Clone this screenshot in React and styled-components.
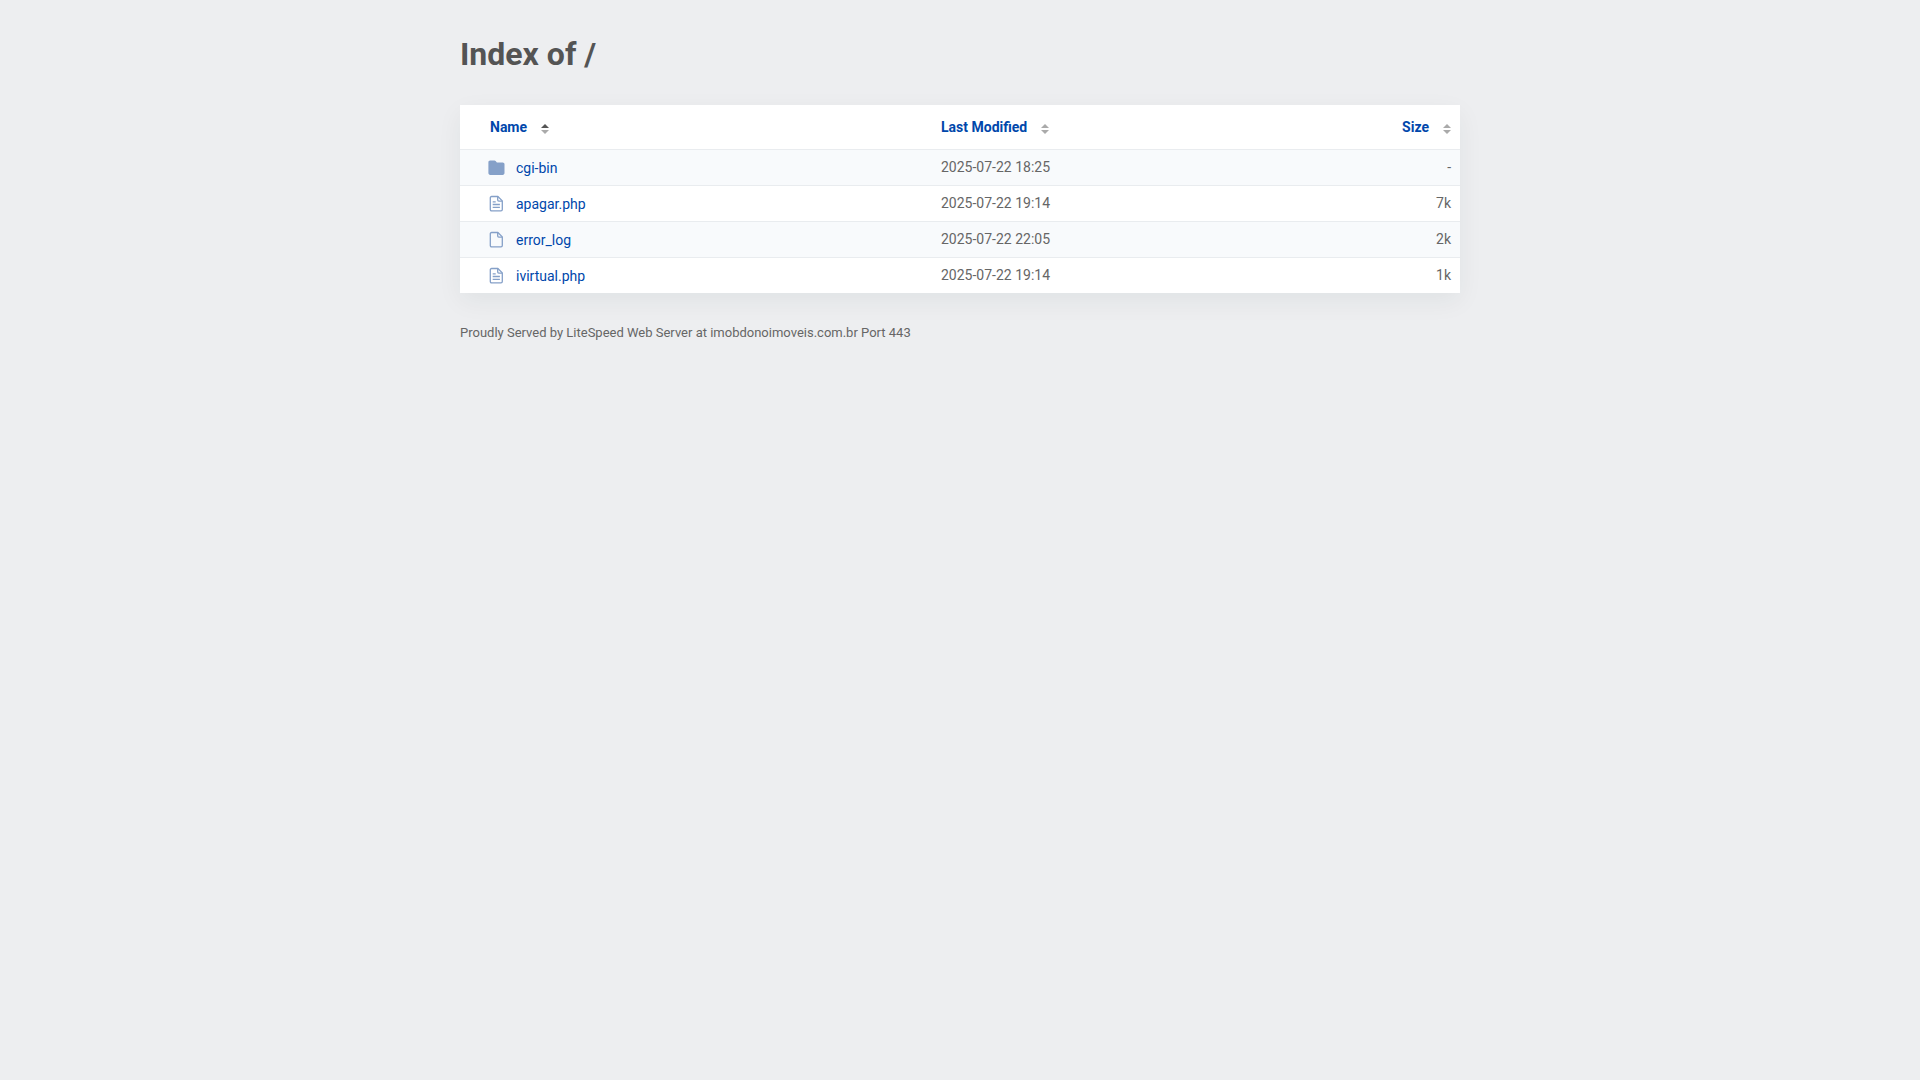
import React from "react";
import styled, { createGlobalStyle } from "styled-components";

const columns = [
  { label: "Name", sort: "ascending" },
  { label: "Last Modified" },
  { label: "Size", end: true },
];

const files = [
  { name: "cgi-bin", type: "folder", modified: "2025-07-22 18:25", size: "-" },
  { name: "apagar.php", type: "script", modified: "2025-07-22 19:14", size: "7k" },
  { name: "error_log", type: "file", modified: "2025-07-22 22:05", size: "2k" },
  { name: "ivirtual.php", type: "script", modified: "2025-07-22 19:14", size: "1k" },
];

function FileIcon({ type }) {
  if (type === "folder") {
    return (
      <Icon viewBox="0 0 18 18" aria-hidden="true">
        <path
          d="M2.2 1.500h4.300c.5 0 .8.2 1.100.5l1.300 1.500h5.800c1.100 0 1.800.8 1.800 1.800v8.800c0 1.100-.7 1.800-1.800 1.800H2.200C1.100 15.900.4 15.200.4 14.100V3.300c0-1 .7-1.800 1.800-1.800z"
          fill="#85a0c8"
        />
      </Icon>
    );
  }
  return (
    <Icon viewBox="0 0 18 18" aria-hidden="true">
      <g fill="none" stroke="#85a0c8" strokeWidth="1.3" strokeLinejoin="round">
        <path d="M3.600 1.500h6.300l4.400 4.400v8.700c0 .8-.5 1.300-1.300 1.300H3.600c-.8 0-1.300-.5-1.300-1.300V2.800c0-.8.5-1.300 1.300-1.300z" />
        <path d="M9.700 1.700v3.400c0 .7.400 1.100 1.100 1.100h3.400" />
        {type === "script" && <path d="M4.700 6.900h3M4.700 9.500h7.200M4.700 12.400h7.200" />}
      </g>
    </Icon>
  );
}

export default function App() {
  return (
    <>
      <GlobalStyle />
      <Page>
        <Title>Index of /</Title>
        <FileTable>
          <thead>
            <tr>
              {columns.map((column) => (
                <HeadCell key={column.label} scope="col" $end={column.end} aria-sort={column.sort}>
                  <SortButton type="button">
                    {column.label}
                    <SortIcon viewBox="0 0 8 10" aria-hidden="true">
                      <path d="M0 4L4 0l4 4z" fill={column.sort ? "#555" : "#aaa"} />
                      <path d="M0 6h8l-4 4z" fill="#aaa" />
                    </SortIcon>
                  </SortButton>
                </HeadCell>
              ))}
            </tr>
          </thead>
          <tbody>
            {files.map((file) => (
              <Row key={file.name}>
                <Cell>
                  <FileLink href={`/${file.name}`}>
                    <FileIcon type={file.type} />
                    {file.name}
                  </FileLink>
                </Cell>
                <Cell>{file.modified}</Cell>
                <Cell $end>{file.size}</Cell>
              </Row>
            ))}
          </tbody>
        </FileTable>
        <Footer>Proudly Served by LiteSpeed Web Server at imobdonoimoveis.com.br Port 443</Footer>
      </Page>
    </>
  );
}

const GlobalStyle = createGlobalStyle`
  *, *::before, *::after {
    box-sizing: border-box;
  }

  body {
    margin: 0;
    background: #edeef0;
    color: #545454;
    font-family: Roboto, "Liberation Sans", sans-serif;
    font-size: 14px;
    line-height: 20px;
  }
`;

const Page = styled.main`
  max-width: 1000px;
  margin: 0 auto;
`;

const Title = styled.h1`
  margin: 0;
  padding: 34px 0 30px;
  font-size: 32px;
  font-weight: 700;
  line-height: 41px;
`;

const FileTable = styled.table`
  width: 100%;
  table-layout: fixed;
  border-collapse: separate;
  border-spacing: 0;
  background: #fff;
  box-shadow: 0 8px 24px rgba(0, 50, 50, 0.06);
`;

const HeadCell = styled.th`
  width: ${(props) => (props.$end ? "20%" : "33%")};
  height: 44px;
  padding: 0 9px 0 11px;
  text-align: ${(props) => (props.$end ? "right" : "left")};

  &:first-child {
    width: 47%;
    padding-left: 30px;
  }
`;

const SortButton = styled.button`
  display: inline-flex;
  align-items: center;
  gap: 14px;
  padding: 0;
  border: 0;
  background: none;
  color: #0047ab;
  font: inherit;
  font-weight: 700;
  cursor: pointer;
`;

const SortIcon = styled.svg`
  width: 8px;
  height: 10px;
  margin-top: 4px;
`;

const Row = styled.tr`
  &:nth-child(odd) {
    background: #f8fafc;
  }
`;

const Cell = styled.td`
  height: 36px;
  padding: 0 9px 1px 11px;
  border-top: 1px solid #e9ecef;
  color: #666;
  text-align: ${(props) => (props.$end ? "right" : "left")};

  &:first-child {
    padding: 0 0 0 28px;
  }
`;

const FileLink = styled.a`
  display: flex;
  align-items: center;
  gap: 10px;
  color: #0047ab;
  text-decoration: none;
`;

const Icon = styled.svg`
  width: 18px;
  height: 18px;
  flex: none;
`;

const Footer = styled.footer`
  padding: 30px 0;
  color: #666;
  font-size: 13px;
`;
